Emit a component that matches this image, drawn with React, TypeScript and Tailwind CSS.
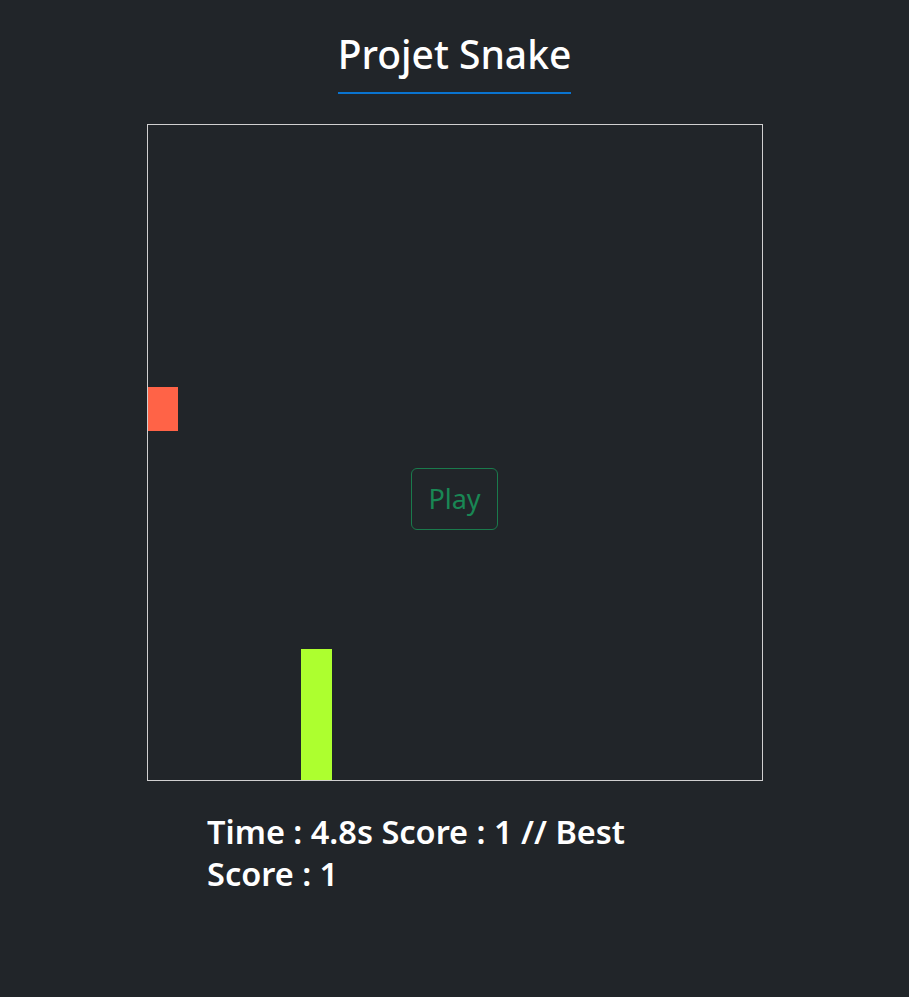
export default function App() {
  const font = { fontFamily: '"Noto Sans", "Open Sans", sans-serif' };

  return (
    <div className="min-h-[997px] bg-[#212529] text-white" style={font}>
      <div className="flex flex-col items-center pt-[27px]">
        <h1 className="text-[39px] font-medium leading-[54px] border-b-2 border-[#0a74d0] pb-[11px]">
          Projet Snake
        </h1>

        <div className="relative mt-[30px] w-[616px] h-[657px] border border-[#d0d0d0]">
          {/* food */}
          <div className="absolute left-0 top-[262px] w-[30px] h-[44px] bg-[#ff6347]" />
          {/* snake */}
          <div className="absolute left-[153px] top-[524px] w-[31px] h-[131px] bg-[#adff2f]" />

          <div className="absolute inset-0 flex items-center justify-center">
            <button className="mt-[92px] w-[87px] h-[62px] rounded-[6px] border border-[#1a7a4c] text-[#198754] text-[27px] leading-none">
              Play
            </button>
          </div>
        </div>

        <div className="w-[495px] mt-[30px] text-[32.5px] font-semibold leading-[42px]">
          Time : 4.8s Score : 1 // Best Score : 1
        </div>
      </div>
    </div>
  );
}
